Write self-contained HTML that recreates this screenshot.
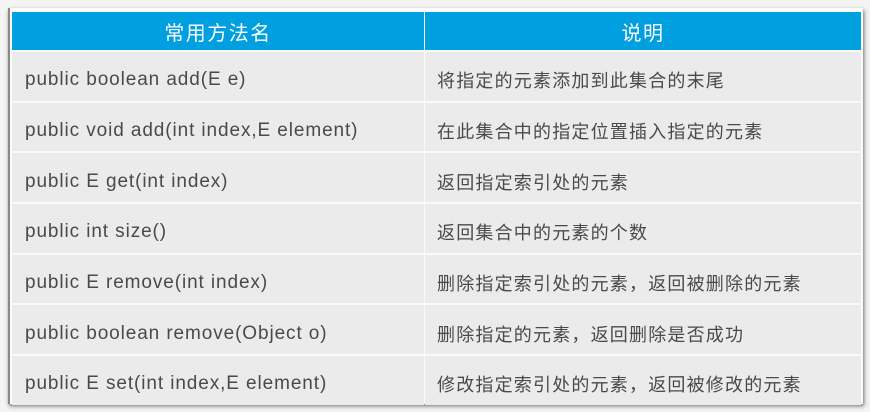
<!DOCTYPE html>
<html><head><meta charset="utf-8"><style>
body{margin:0;width:870px;height:412px;background:#f4f4f4;overflow:hidden;font-family:"Liberation Sans","Noto Sans CJK SC",sans-serif}
.box{position:absolute;left:8px;top:8px;width:853px;height:396px;background:#fafafa;box-shadow:1px 2px 4px rgba(0,0,0,.55);border-left:2px solid #8a8a8a}
table{position:absolute;left:11px;top:10px;border-collapse:separate;border-spacing:1px 2px;width:851px}
td,th{height:48.7px;padding:0;font-weight:normal}
th{background:#009fe0;color:#fff;font-size:20px;letter-spacing:1.5px;height:38px;text-align:center}
td{background:#ebebeb;color:#4a4a4a;font-size:18px;padding-top:8px;box-sizing:border-box}
td.a{width:412px;padding-left:13px;font-size:19px;letter-spacing:0.9px}
td.b{padding-left:12px;letter-spacing:1.2px}
</style></head><body>
<div class="box"></div>
<table>
<tr><th style="width:412px">常用方法名</th><th>说明</th></tr>
<tr><td class="a">public boolean add(E e)</td><td class="b">将指定的元素添加到此集合的末尾</td></tr>
<tr><td class="a">public void add(int index,E element)</td><td class="b">在此集合中的指定位置插入指定的元素</td></tr>
<tr><td class="a">public E get(int index)</td><td class="b">返回指定索引处的元素</td></tr>
<tr><td class="a">public int size()</td><td class="b">返回集合中的元素的个数</td></tr>
<tr><td class="a">public E remove(int index)</td><td class="b">删除指定索引处的元素，返回被删除的元素</td></tr>
<tr><td class="a">public boolean remove(Object o)</td><td class="b">删除指定的元素，返回删除是否成功</td></tr>
<tr><td class="a">public E set(int index,E element)</td><td class="b">修改指定索引处的元素，返回被修改的元素</td></tr>
</table>
</body></html>
